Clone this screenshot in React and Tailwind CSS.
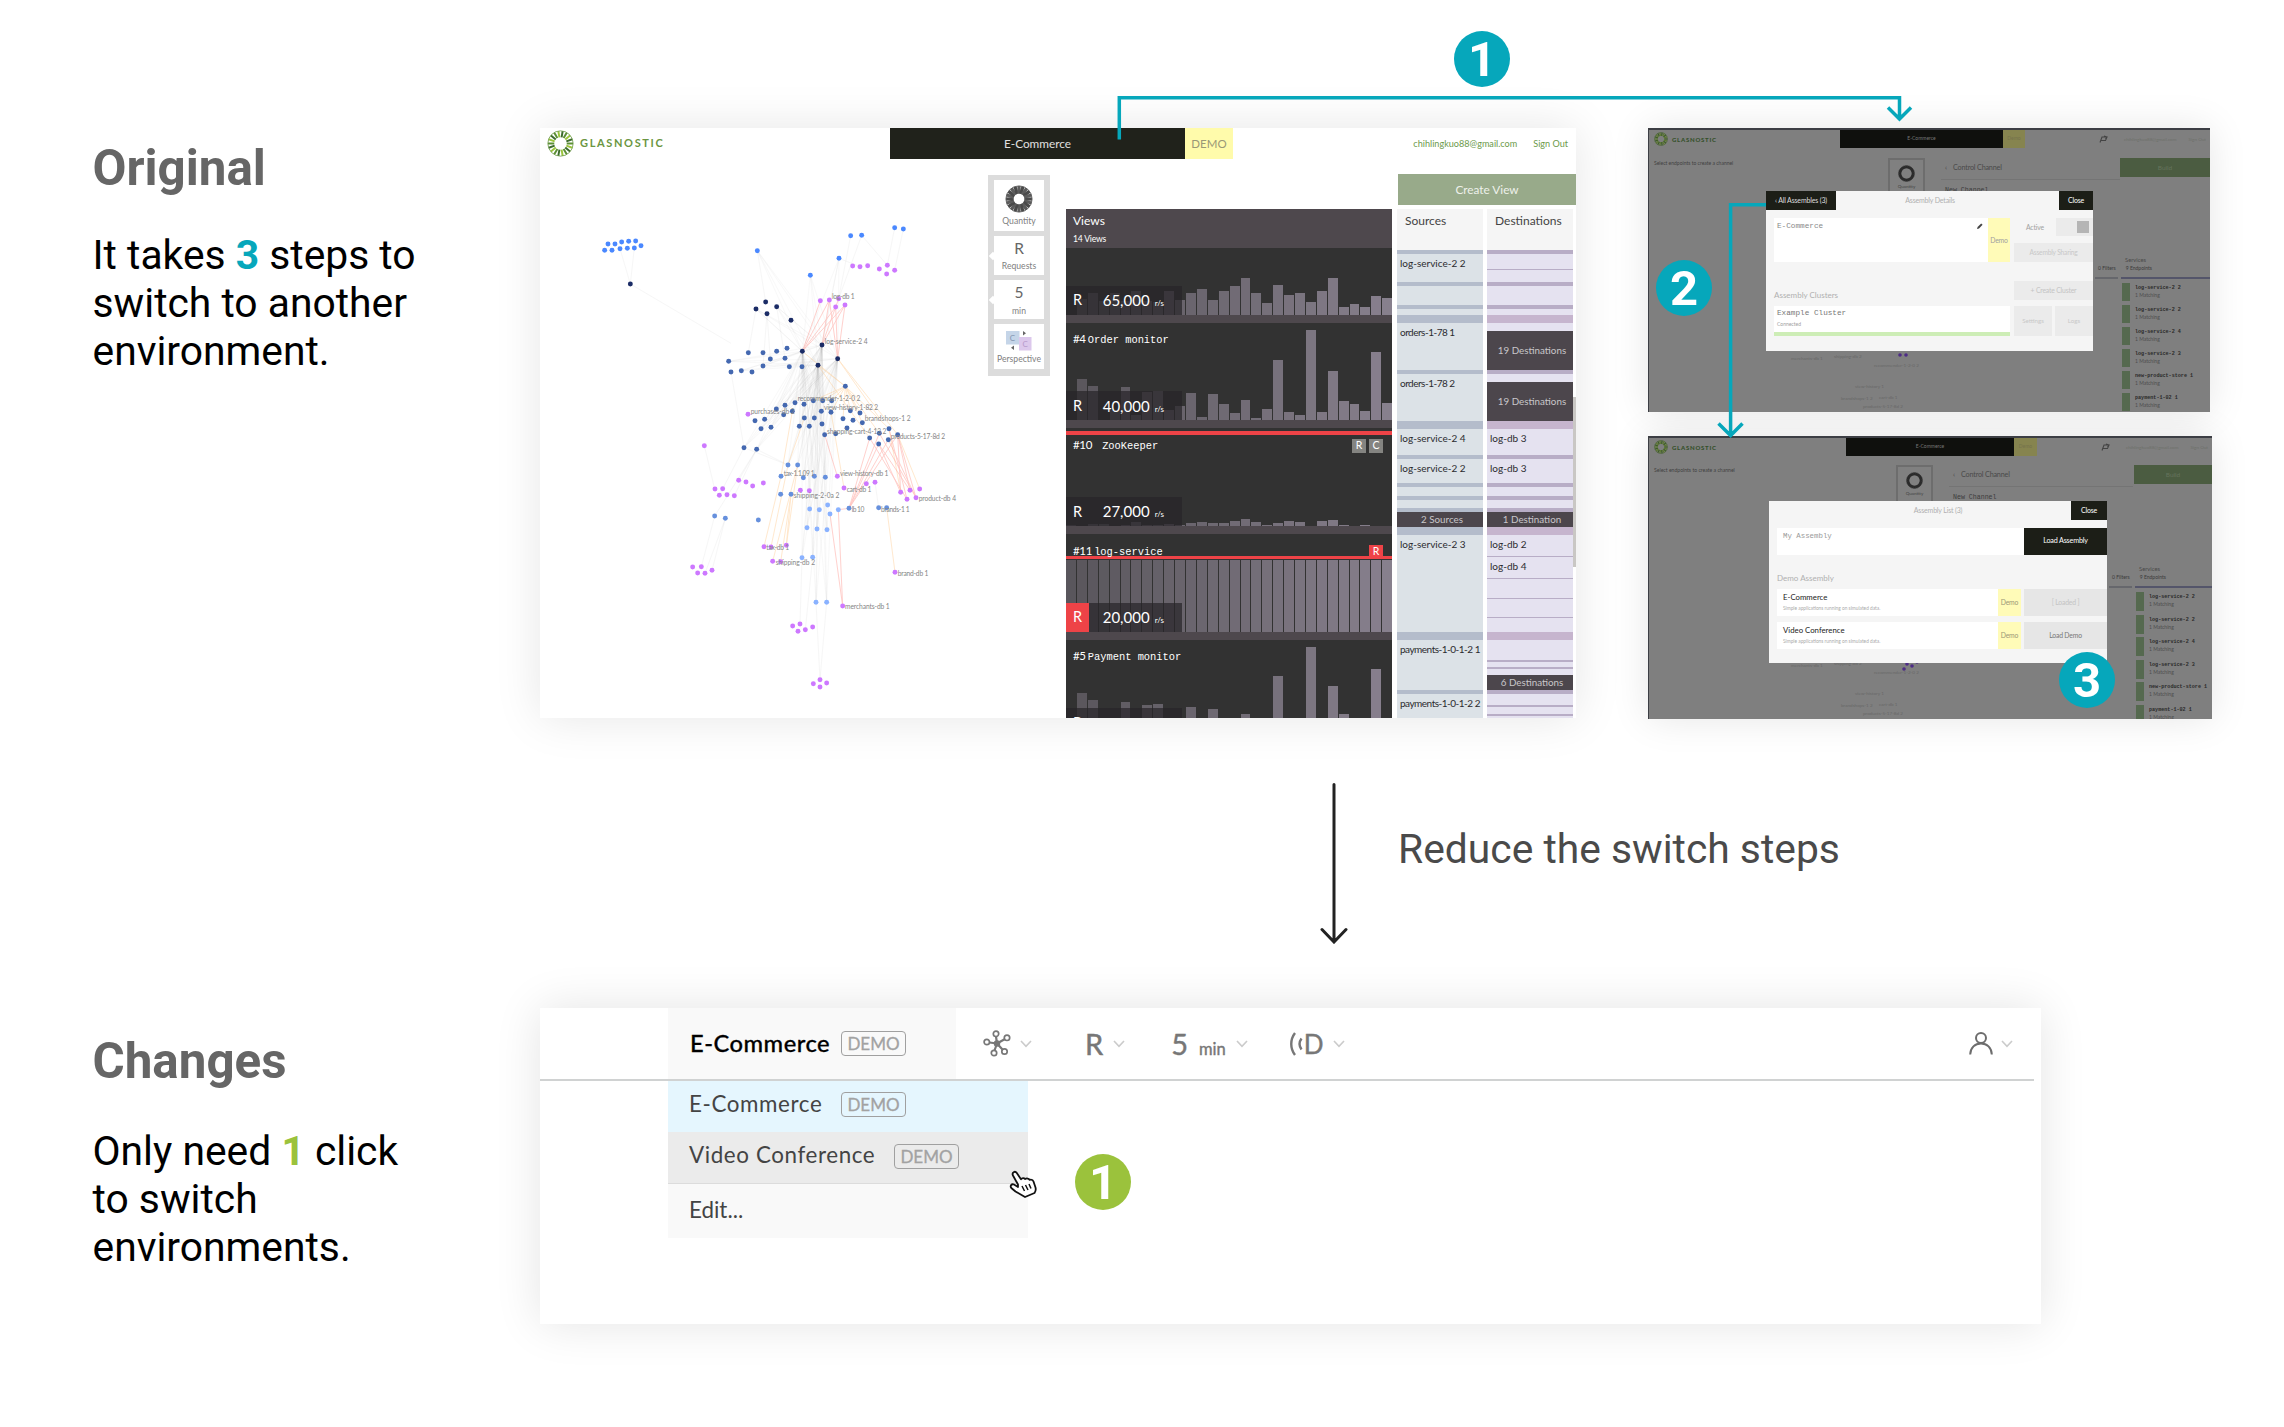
import React from "react";

const NODE_FILL = {
  b: "#4a88ff",
  n: "#1b2c66",
  m: "#4468b0",
  s: "#6690dd",
  l: "#8ab2ff",
  p: "#cd78ff",
};

const NODES = [
  ["b", [[234, 402], [255, 402], [275, 396], [296, 394], [317, 393], [333, 407], [224, 421], [246, 421], [270, 416], [292, 415], [313, 414], [682, 422], [841, 496], [927, 445], [962, 377], [995, 376], [1094, 353], [1120, 357]]],
  ["n", [[301, 522], [707, 576], [678, 597], [740, 590], [711, 611], [783, 631], [876, 705], [817, 724], [923, 746], [864, 766]]],
  ["p", [[968, 468], [990, 470], [1013, 467], [1048, 477], [1072, 466], [1094, 481], [1070, 492], [871, 572], [898, 570], [926, 566], [917, 591], [945, 585], [654, 913]]],
  ["m", [[655, 728], [699, 728], [740, 724], [771, 715], [721, 747], [765, 745], [699, 768], [778, 770], [816, 770], [596, 754], [603, 786], [634, 782], [666, 786], [946, 829], [795, 878], [822, 883], [850, 872], [878, 872], [905, 872], [765, 886], [739, 897], [787, 904], [761, 914], [874, 904], [903, 907], [961, 902], [990, 909], [675, 932], [704, 928], [693, 956], [723, 952], [823, 924], [853, 924], [939, 926], [969, 931], [997, 938], [808, 949], [838, 949], [876, 942], [951, 954], [884, 974], [917, 971], [1019, 984], [1048, 970], [1077, 956], [1103, 974], [1075, 989], [1046, 1002], [642, 1013], [680, 1018]]],
  ["s", [[774, 1065], [803, 1065], [753, 1099], [820, 1103], [853, 1099], [886, 1102], [752, 1153], [783, 1153], [554, 1218], [586, 1225], [685, 1230], [957, 1195], [1046, 1193], [1070, 1193]]],
  ["l", [[839, 1197], [868, 1199], [893, 1185], [925, 1199], [900, 1212], [831, 1253], [861, 1257], [891, 1259], [816, 1343], [848, 1342], [858, 1477], [890, 1477]]],
  ["p", [[523, 1007], [626, 1111], [648, 1116], [668, 1128], [700, 1119], [555, 1137], [578, 1136], [568, 1156], [591, 1154], [613, 1157], [922, 1099], [942, 1134], [811, 1141], [838, 1142], [1009, 1121], [1035, 1117], [1112, 1147], [1140, 1141], [1169, 1137], [1131, 1168], [1158, 1163], [702, 1310], [723, 1311], [769, 1306], [728, 1354], [752, 1355], [488, 1371], [514, 1370], [503, 1389], [525, 1390], [546, 1381], [1095, 1387], [938, 1488], [788, 1548], [810, 1542], [804, 1564], [826, 1559], [848, 1551], [850, 1721], [870, 1709], [890, 1719], [870, 1731]]],
];

const LABELS = [
  [906, 568, 68, "log-db 1"],
  [884, 701, 129, "log-service-2 4"],
  [803, 874, 188, "recommender-1-2-0 2"],
  [662, 911, 132, "purchases-db 2"],
  [882, 901, 162, "view-history-1-82 2"],
  [1004, 934, 138, "brandshops-1 2"],
  [891, 972, 178, "shopping-cart-4-13 2"],
  [1082, 986, 163, "products-5-17-8d 2"],
  [761, 1097, 93, "tax-1.1.09 1"],
  [930, 1097, 145, "view-history-db 1"],
  [950, 1145, 74, "cart-db 1"],
  [791, 1165, 137, "shipping-2-0a 2"],
  [1166, 1174, 112, "product-db 4"],
  [965, 1207, 38, "lb 10"],
  [1053, 1206, 86, "brands-1 1"],
  [709, 1321, 68, "tax-db 1"],
  [737, 1365, 118, "shipping-db 2"],
  [1103, 1398, 92, "brand-db 1"],
  [945, 1498, 134, "merchants-db 1"],
];

const RED_EDGES = [
  [871, 572, 817, 724], [898, 570, 817, 724], [917, 591, 817, 724], [945, 585, 817, 724],
  [898, 570, 876, 705], [926, 566, 876, 705], [945, 585, 876, 705],
  [898, 570, 923, 746], [917, 591, 923, 746], [945, 585, 923, 746],
  [957, 1195, 1019, 984], [957, 1195, 1048, 970], [957, 1195, 1046, 1002], [957, 1195, 1075, 989], [957, 1195, 1103, 974],
  [1019, 984, 1131, 1168], [1046, 1002, 1140, 1141], [1075, 989, 1158, 1163], [1103, 974, 1158, 1163],
  [1077, 956, 1131, 1168], [1103, 974, 1112, 1147], [1048, 970, 1158, 1163], [1046, 1002, 1112, 1147], [1103, 974, 1140, 1141],
  [884, 974, 922, 1099], [925, 1199, 938, 1488], [900, 1212, 938, 1488], [925, 1199, 957, 1195],
];

const ORANGE_EDGES = [
  [817, 724, 946, 829], [864, 766, 946, 829], [923, 746, 1048, 924], [946, 829, 905, 872], [946, 829, 878, 872],
  [946, 829, 961, 902], [946, 829, 990, 909], [946, 829, 997, 938], [946, 829, 903, 907], [946, 829, 939, 926],
  [946, 829, 1048, 970], [946, 829, 1077, 956], [946, 829, 850, 872], [1103, 974, 1169, 1137], [1077, 956, 1112, 1147],
  [753, 1099, 702, 1310], [774, 1065, 723, 1311], [803, 1065, 728, 1354], [783, 1153, 752, 1355], [783, 1153, 769, 1306],
  [803, 1065, 769, 1306], [1070, 1193, 1095, 1387], [903, 907, 942, 1134], [923, 746, 1103, 974], [864, 766, 1019, 984],
  [787, 904, 753, 1099], [823, 924, 774, 1065],
];

const HUBS = [[817, 724], [876, 705], [923, 746], [864, 766]];
const GREY_TARGETS = [
  [682, 422], [841, 496], [927, 445], [678, 597], [740, 590], [596, 754], [634, 782], [699, 768], [739, 897], [761, 914],
  [795, 878], [822, 883], [850, 872], [878, 872], [693, 956], [723, 952], [808, 949], [838, 949], [853, 924], [876, 942],
  [642, 1013], [680, 1018], [774, 1065], [803, 1065], [820, 1103], [853, 1099], [886, 1102], [831, 1253], [861, 1257],
  [891, 1259], [816, 1343], [848, 1342], [858, 1477], [890, 1477],
];
const GREY_EDGES = [
  [270, 416, 301, 522], [313, 414, 301, 522], [301, 522, 603, 700], [682, 422, 707, 576], [962, 377, 926, 566],
  [995, 376, 926, 566], [1094, 353, 1072, 466], [1120, 357, 1094, 481], [995, 376, 1072, 466], [927, 445, 990, 470],
  [603, 786, 642, 1013], [642, 1013, 774, 1065], [680, 1018, 774, 1065], [642, 1013, 568, 1156], [680, 1018, 613, 1157],
  [680, 1018, 626, 1111], [554, 1218, 514, 1370], [586, 1225, 546, 1381], [586, 1225, 525, 1390], [680, 1018, 554, 1218],
  [816, 1343, 810, 1542], [848, 1342, 826, 1559], [858, 1477, 870, 1709], [890, 1477, 870, 1709], [523, 1007, 554, 1137],
  [678, 597, 655, 728], [711, 611, 699, 768], [711, 611, 721, 747], [740, 590, 765, 745], [1035, 1117, 1046, 1193],
];

function ServiceGraph() {
  return (
    <svg className="h-[554px] w-[448px]" viewBox="30 162 1344 1662">
      <g stroke="#9a9a9a" strokeWidth="2">
        {GREY_TARGETS.map(([x, y], i) =>
          HUBS.map(([hx, hy], j) => <line key={i + "-" + j} x1={hx} y1={hy} x2={x} y2={y} opacity="0.09" />)
        )}
        {GREY_EDGES.map(([a, b, c, d], i) => (
          <line key={i} x1={a} y1={b} x2={c} y2={d} opacity="0.12" />
        ))}
      </g>
      <g stroke="#ffc27a" strokeWidth="2.4" opacity="0.45">
        {ORANGE_EDGES.map(([a, b, c, d], i) => <line key={i} x1={a} y1={b} x2={c} y2={d} />)}
      </g>
      <g stroke="#ff8d84" strokeWidth="2.4" opacity="0.5">
        {RED_EDGES.map(([a, b, c, d], i) => <line key={i} x1={a} y1={b} x2={c} y2={d} />)}
      </g>
      {NODES.map(([kind, points], i) => (
        <g key={i} fill={NODE_FILL[kind]}>
          {points.map(([x, y], j) => <circle key={j} cx={x} cy={y} r="7.4" />)}
        </g>
      ))}
      <g fill="#858585" fontFamily="Lato, sans-serif" fontSize="20">
        {LABELS.map(([x, y, w, t]) => <text key={t} x={x} y={y} textLength={w}>{t}</text>)}
      </g>
    </svg>
  );
}

function Ring({ className, colors, inner = 6, outer = 12, width = 1.9, count = 18 }) {
  return (
    <svg className={className} viewBox="-13 -13 26 26">
      {Array.from({ length: count }, (_, i) => {
        const a = (i / count) * Math.PI * 2;
        return (
          <line
            key={i}
            x1={Math.cos(a) * inner}
            y1={Math.sin(a) * inner}
            x2={Math.cos(a) * outer}
            y2={Math.sin(a) * outer}
            stroke={colors[i % colors.length]}
            strokeWidth={width}
          />
        );
      })}
      <circle r="12.2" fill="none" stroke={colors[0]} strokeWidth="0.7" />
    </svg>
  );
}

function Bars({ values }) {
  return (
    <div className="flex h-full w-full items-end gap-px">
      {values.map((v, i) => (
        <div key={i} className="flex-1 bg-[#9990a0]" style={{ height: v, opacity: 0.38 + (i / 29) * 0.45 }} />
      ))}
    </div>
  );
}

const VIEWS = [
  { value: "65,000", bars: [0, 16, 22, 14, 22, 14, 24, 14, 13, 24, 15, 22, 26, 15, 24, 29, 37, 22, 12, 30, 20, 22, 13, 24, 37, 8, 11, 8, 19, 17] },
  { no: "#4", name: "Order monitor", value: "40,000", bars: [0, 41, 34, 0, 10, 33, 5, 28, 29, 10, 14, 27, 3, 26, 16, 7, 20, 2, 11, 60, 8, 5, 90, 8, 49, 19, 16, 9, 68, 17] },
  { no: "#10", name: "ZooKeeper", value: "27,000", badges: ["R", "C"], topLine: true, bars: [1, 0, 2, 2, 0, 1, 4, 1, 1, 2, 1, 3, 4, 3, 3, 5, 7, 4, 1, 3, 5, 4, 0, 5, 6, 1, 0, 1, 0, 0] },
  { no: "#11", name: "log-service", value: "20,000", badges: ["R"], alert: true, bars: Array(30).fill(72) },
  { no: "#5", name: "Payment monitor", value: "7,500", bars: [0, 44, 37, 0, 12, 35, 8, 32, 33, 10, 14, 30, 3, 28, 18, 9, 23, 4, 12, 61, 10, 6, 90, 10, 51, 23, 17, 10, 68, 18] },
];

function ViewCard({ view }) {
  return (
    <div className="relative h-[105.7px] shrink-0 border-b-8 border-[#4e484d] bg-[#323232]">
      <Bars values={view.bars} />
      {view.topLine && <div className="absolute inset-x-0 top-[3px] h-1 bg-[#ee4347]" />}
      {view.alert && <div className="absolute inset-x-0 top-[22px] h-[3px] bg-[#ee4347]" />}
      {view.name && (
        <div className="absolute left-[7px] top-[9.5px] flex items-baseline gap-[2px] text-[11.5px] leading-[14px] tracking-[-0.3px] text-white">
          <span>{view.no}</span>
          <span className={view.no === "#10" ? "ml-2 font-['Liberation_Mono',monospace] text-[10.4px] tracking-normal" : "font-['Liberation_Mono',monospace] text-[10.4px] tracking-normal"}>{view.name}</span>
        </div>
      )}
      {view.badges && (
        <div className="absolute right-[9px] top-[10.5px] flex gap-[3px]">
          {view.badges.map((b) => (
            <span key={b} className={view.alert ? "flex size-[14px] items-center justify-center bg-[#ee4347] text-[10.5px] text-white" : "flex size-[14px] items-center justify-center bg-[#848481] text-[10.5px] text-white"}>{b}</span>
          ))}
        </div>
      )}
      <div className="absolute bottom-0 left-0 flex h-[29px] w-[116px] items-center bg-[#262428]/70 text-white">
        <span className={view.alert ? "flex h-full w-[23px] items-center pl-[7px] text-[14.5px] bg-[#ee4347]" : "flex h-full w-[23px] items-center pl-[7px] text-[14.5px]"}>R</span>
        <span className="flex flex-1 items-baseline justify-end gap-[5px] pr-[18px] text-[15px]">
          {view.value}
          <span className="text-[8px]">r/s</span>
        </span>
      </div>
    </div>
  );
}

const SOURCES = [
  [4, "band"], [28, "cell", "log-service-2 2"], [4, "band"], [19, "cell"], [4, "band"], [6, "cell"], [8, "band"],
  [47, "cell", "orders-1-78 1"], [4, "band"], [47, "cell", "orders-1-78 2"], [8, "band"], [26, "cell", "log-service-2 4"],
  [4, "band"], [24, "cell", "log-service-2 2"], [4, "band"], [9, "cell"], [4, "band"], [8, "cell"], [4, "band"],
  [15, "dark", "2 Sources"], [8, "band"], [97, "cell", "log-service-2 3"], [8, "band"], [50, "cell", "payments-1-0-1-2 1"],
  [4, "band"], [24, "cell", "payments-1-0-1-2 2"],
];

const DESTINATIONS = [
  [4, "band"], [15, "cell"], [1, "band"], [12, "cell"], [4, "band"], [19, "cell"], [4, "band"], [6, "cell"], [8, "wide"],
  [8, "cell"], [39, "dark", "19 Destinations"], [4, "band"], [8, "cell"], [39, "dark", "19 Destinations"], [8, "wide"],
  [26, "cell", "log-db 3"], [4, "band"], [24, "cell", "log-db 3"], [4, "band"], [9, "cell"], [4, "band"], [8, "cell"], [4, "band"],
  [15, "dark", "1 Destination"], [8, "wide"], [21, "cell", "log-db 2"], [1, "band"], [21, "cell", "log-db 4"], [1, "band"],
  [19, "cell"], [1, "band"], [18, "cell"], [1, "band"], [14, "cell"], [8, "wide"], [20, "cell"], [2, "band"], [5, "cell"], [2, "band"],
  [6, "cell"], [15, "dark", "6 Destinations"], [4, "band"], [11, "cell"], [2, "band"], [7, "cell"], [2, "band"], [2, "cell"],
];

const SEGMENT_CLASS = {
  source: { band: "bg-[#b4bccb]", cell: "bg-[#dce2e7]", wide: "bg-[#b4bccb]" },
  dest: { band: "bg-[#b8adc6]", cell: "bg-[#e5e2f0]", wide: "bg-[#c6b5ce]" },
};

function SegmentColumn({ title, tone, segments }) {
  return (
    <div className="flex w-[86px] flex-col overflow-hidden">
      <div className="h-[41px] shrink-0 bg-[#f5f5f5] pl-2 pt-[4px] text-[12px] leading-[15px] text-[#444]">{title}</div>
      {segments.map(([h, kind, label], i) =>
        kind === "dark" ? (
          <div key={i} className="flex shrink-0 items-center justify-center pl-1 text-[9.8px] leading-none bg-[#4c464c] text-[#c9c7ca]" style={{ height: h }}>{label}</div>
        ) : (
          <div key={i} className={"shrink-0 whitespace-nowrap pl-[3px] text-[10px] leading-[18px] text-[#2b2b2f] " + SEGMENT_CLASS[tone][kind]} style={{ height: h }}>
            <span className={label && (label.length > 15 || label.startsWith("orders")) ? "tracking-[-0.5px]" : ""}>{label}</span>
          </div>
        )
      )}
    </div>
  );
}

function ToolCard({ className, children, label, notch }) {
  return (
    <div className={"relative flex w-[50px] flex-col items-center bg-white " + className}>
      {notch && <div className="absolute -left-1 top-1/2 size-[6px] -translate-y-1/2 rotate-45 bg-white" />}
      {children}
      <span className="text-[8.6px] leading-[11px] text-[#808080]">{label}</span>
    </div>
  );
}

function OriginalScreen() {
  return (
    <div className="flex h-[590px] w-[1036px] shrink-0 flex-col overflow-hidden bg-white">
      <div className="flex h-[36px] shrink-0 items-start">
        <div className="flex w-[350px] items-center pl-[7px] pt-[2px]">
          <Ring className="size-[27px]" colors={["#5c8f35", "#9bc53d", "#3c6b2c"]} />
          <span className="ml-[6px] text-[11px] font-bold tracking-[1.65px] text-[#6b9642]">GLASNOSTIC</span>
        </div>
        <div className="flex h-[31px] w-[295px] items-center justify-center bg-[#20221b] text-[11.8px] text-[#e0e0e0]">E-Commerce</div>
        <div className="flex h-[31px] w-[48px] items-center justify-center bg-[#fffbab] text-[11.5px] text-[#9a9876]">DEMO</div>
        <div className="flex h-[31px] flex-1 items-center justify-end gap-4 pr-2 text-[9.1px] text-[#6c9a4a]">
          <span>chihlingkuo88@gmail.com</span>
          <span>Sign Out</span>
        </div>
      </div>
      <div className="flex flex-1">
        <ServiceGraph />
        <div className="mt-[11px] flex h-[201px] w-[62px] flex-col items-center gap-[5px] bg-[#dcdcdc] pt-[5px]">
          <ToolCard className="h-[51px] pt-[5px]" label="Quantity">
            <Ring className="mb-[3px] size-[28px]" colors={["#4a4a4a", "#5c5c5c"]} inner={5} width={3} count={20} />
          </ToolCard>
          <ToolCard className="h-[39px] pt-[3px]" label="Requests" notch>
            <span className="mb-[4px] text-[15.5px] leading-[18px] text-[#666]">R</span>
          </ToolCard>
          <ToolCard className="h-[39px] pt-[3px]" label="min" notch>
            <span className="mb-[5px] text-[15.5px] leading-[18px] text-[#666]">5</span>
          </ToolCard>
          <ToolCard className="h-[45px] pt-[6px]" label="Perspective">
            <svg className="mb-[3px] h-[21px] w-[28px]" viewBox="0 0 28 21">
              <rect x="1" y="1" width="13.5" height="13.5" fill="#c5d5e8" />
              <rect x="14" y="7" width="12.5" height="13.5" fill="#dcc8ec" />
              <path d="M18 1l3 2.2-3 2.2zM9 15.5v4.5l-3-2.2z" fill="#666" />
              <text x="4.8" y="11" fontSize="8" fontFamily="Lato" fill="#8296b0">C</text>
              <text x="17.5" y="17" fontSize="8" fontFamily="Lato" fill="#b79acb">C</text>
            </svg>
          </ToolCard>
        </div>
        <div className="ml-4 mt-[45px] flex h-[509px] w-[326px] flex-col overflow-hidden bg-[#4e484d]">
          <div className="flex h-[39px] shrink-0 flex-col gap-[6px] pl-[7px] pt-[4px] text-white">
            <span className="text-[12px] leading-[15px]">Views</span>
            <span className="text-[8.6px] leading-[10px] tracking-tight">14 Views</span>
          </div>
          <div className="flex h-[470px] flex-col overflow-hidden">
            <div className="-mt-[31px] flex flex-col">
              {VIEWS.map((v) => <ViewCard key={v.value} view={v} />)}
            </div>
          </div>
        </div>
        <div className="ml-[5px] mt-[10px] w-[179px]">
          <div className="ml-px flex h-[31px] items-center justify-center bg-[#98aa8a] text-[11.8px] text-[#eef1eb]">Create View</div>
          <div className="mt-1 flex h-[509px] gap-1">
            <SegmentColumn title="Sources" tone="source" segments={SOURCES} />
            <SegmentColumn title="Destinations" tone="dest" segments={DESTINATIONS} />
            <div className="-ml-1 mt-[188px] h-[170px] w-[3px] bg-[#c9c7c4]" />
          </div>
        </div>
      </div>
    </div>
  );
}

const SERVICES = ["log-service-2 2", "log-service-2 2", "log-service-2 4", "log-service-2 3", "new-product-store 1", "payment-1-02 1"];

const MINI_A = {
  frame: "h-[284px] w-[562px]",
  left: "w-[191px]", bar: "w-[163px]", demo: "w-[22px]",
  body: "pt-[10px]",
  hint: "w-[239px] text-[5px]",
  build: "w-[90px]",
  control: "ml-4 w-[179px]",
  list: "w-[115px] pt-[66px]",
  row: "h-[18px] mb-[4px]",
};
const MINI_B = {
  frame: "h-[283px] w-[564px]",
  left: "w-[197px]", bar: "w-[168px]", demo: "w-[23px]",
  body: "pt-[9px]",
  hint: "w-[247px] text-[5.1px]",
  build: "w-[78px]",
  control: "ml-4 w-[184px]",
  list: "w-[103px] pt-[68px]",
  row: "h-[19px] mb-[3.6px]",
};

function DimmedScreen({ size, dots, children }) {
  return (
    <div className={"relative flex flex-col overflow-hidden border-l border-t-2 border-[#3c3e44] bg-[#7f7f7f] " + size.frame}>
      <div className="flex h-[18px] shrink-0">
        <div className={"flex items-center gap-1 pl-[5px] " + size.left}>
          <Ring className="size-[14px]" colors={["#3f5f26", "#5d7a30"]} width={2.4} />
          <span className="text-[6px] font-black tracking-[0.75px] text-[#34502a]">GLASNOSTIC</span>
        </div>
        <div className={"flex items-center justify-center bg-[#0f100d] text-[5px] text-[#777] " + size.bar}>E-Commerce</div>
        <div className={"flex items-center justify-center bg-[#86844f] text-[5px] text-[#74724c] " + size.demo}>Demo</div>
        <div className="flex min-w-0 flex-1 items-center justify-end gap-3 pr-1 text-[4.6px] text-[#6d706a]">
          <svg className="mr-1 size-[9px]" viewBox="0 0 9 9" fill="none" stroke="#444" strokeWidth="1.1">
            <path d="M1 7.500L3 2H8L6.500 5.500H2M5 1L8 2L6.500 4" />
          </svg>
          <span>chihlingkuo88@gmail.com</span>
          <span>Sign Out</span>
        </div>
      </div>
      <div className={"flex flex-1 " + size.body}>
        <div className={"shrink-0 pt-[1px] leading-[8px] text-[#3f3f3f] " + size.hint}>
          <span className="pl-[5px]">Select endpoints to create a channel</span>
        </div>
        <div className="flex h-[40px] w-[37px] shrink-0 flex-col items-center border-2 border-[#6d6d6d] bg-[#808080] pt-[5px]">
          <Ring className="size-[17px]" colors={["#2b2b2b"]} inner={8} width={3.5} count={24} />
          <span className="mt-[2px] text-[4.5px] leading-[5px] text-[#444]">Quantity</span>
        </div>
        <div className={"shrink-0 " + size.control}>
          <div className="flex h-[22px] items-center gap-[6px] border-b border-[#747474] pl-1 text-[7.2px] text-[#4a4a4a]">
            <span>‹</span>
            <span className="tracking-tight">Control Channel</span>
          </div>
          <div className="pl-1 pt-[6px] font-['Liberation_Mono',monospace] text-[6.6px] text-[#3c3c3c]">New Channel</div>
        </div>
        <div className="flex min-w-0 flex-1 flex-col items-end">
          <div className={"flex h-[19px] shrink-0 items-center justify-center bg-[#4b5c41] text-[6.5px] text-[#65735c] " + size.build}>Build</div>
          <div className={"mt-[12px] flex flex-col whitespace-nowrap text-[5px] leading-[9px] text-[#3b3b3b] " + size.list}>
            <div className="pl-[30px] text-[5.8px] text-[#4a4a4a]">Services</div>
            <div className="flex gap-[10px] pl-[3px]">
              <span>0 Filters</span>
              <span>9 Endpoints</span>
            </div>
            <div className="mb-1 mt-[4px] flex gap-[3px]">
              <div className="h-[2px] w-[23px] bg-[#66676c]" />
              <div className="h-[2px] flex-1 bg-[#54556a]" />
            </div>
            {SERVICES.map((s, i) => (
              <div key={i} className={"flex shrink-0 pl-[27px] " + size.row}>
                <div className="w-2 shrink-0 bg-[#55694f]" />
                <div className="flex flex-1 flex-col pl-[5px] pt-[1px]">
                  <span className="font-['Liberation_Mono',monospace] text-[5.1px] font-bold leading-[8px] text-[#2a2a2a]">{s}</span>
                  <span className="text-[5px] leading-[7px] text-[#4e4e4e]">1 Matching</span>
                </div>
              </div>
            ))}
          </div>
        </div>
      </div>
      <svg className="absolute bottom-0 left-[130px] h-[66px] w-[170px]" viewBox="0 0 170 66">
        <g fill="#686868" fontFamily="Lato, sans-serif" fontSize="4.6">
          <text x="12" y="14">merchants-db 1</text>
          <text x="55" y="12">shipping-db 2</text>
          <text x="95" y="21">recommender-1-2-0 2</text>
          <text x="76" y="42">view-history 1</text>
          <text x="62" y="54">brandshops-1 2</text>
          <text x="100" y="53">cart-db 1</text>
          <text x="84" y="62">products-5-17-8d 2</text>
        </g>
        <g fill="#4d2c86">{dots.map(([x, y]) => <circle key={x} cx={x} cy={y} r="1.8" />)}</g>
      </svg>
      {children}
    </div>
  );
}

function AssemblyDetails() {
  return (
    <div className="absolute left-[117px] top-[61px] flex h-[160px] w-[327px] flex-col bg-[#f5f5f5] text-[#a0a0a0]">
      <div className="flex h-[19px] items-stretch justify-between text-[7px]">
        <div className="flex w-[70px] items-center justify-center bg-[#1c1e17] text-[7px] tracking-tight text-[#ddd]">‹ All Assembles (3)</div>
        <div className="flex items-center pr-[35px] tracking-tight text-[#b0b0b0]">Assembly Details</div>
        <div className="flex w-[34px] items-center justify-center bg-[#1c1e17] tracking-tight text-white">Close</div>
      </div>
      <div className="mt-2 flex h-[44px] pl-2">
        <div className="flex w-[214px] justify-between bg-white px-[3px] pt-[3px]">
          <span className="font-['Liberation_Mono',monospace] text-[7.7px] leading-[11px] text-[#888]">E-Commerce</span>
          <svg className="mr-[2px] mt-[2px] size-[6px]" viewBox="0 0 6 6"><path d="M0 6l.6-2L4.2.4l1.4 1.4L2 5.4z" fill="#444" /></svg>
        </div>
        <div className="flex w-[22px] items-center justify-center bg-[#fffbb8] text-[6.8px] tracking-tight">Demo</div>
        <div className="ml-[4px] flex flex-1 flex-col justify-between">
          <div className="flex h-[18px] items-center justify-between pl-3 text-[6.8px] tracking-tight">
            <span>Active</span>
            <div className="flex h-[18px] w-[37px] items-center justify-end bg-[#ebebeb] pr-1">
              <div className="size-[12px] bg-[#b5b5b5]" />
            </div>
          </div>
          <div className="flex h-[19px] items-center justify-center bg-[#ebebeb] text-[6.6px] tracking-tight text-[#c8c8c8]">Assembly Sharing</div>
        </div>
      </div>
      <div className="mt-[19px] flex h-[19px] pl-2">
        <div className="flex-1 pt-[9px] text-[8px] leading-[11px] text-[#b0b0b0]">Assembly Clusters</div>
        <div className="flex w-[79px] items-center justify-center bg-[#ebebeb] text-[6.8px] tracking-tight text-[#c4c4c4]">+ Create Cluster</div>
      </div>
      <div className="mt-[6px] flex h-[30px] pl-2">
        <div className="flex w-[236px] flex-col border-b-4 border-[#cdedb6] bg-white pl-[3px] pt-[2px]">
          <span className="font-['Liberation_Mono',monospace] text-[7.7px] leading-[11px] text-[#777]">Example Cluster</span>
          <span className="mt-[2px] text-[5px] leading-[7px]">Connected</span>
        </div>
        <div className="ml-[4px] flex w-[38px] items-center justify-center bg-[#ebebeb] text-[6.2px] text-[#c8c8c8]">Settings</div>
        <div className="ml-[3px] flex flex-1 items-center justify-center bg-[#ebebeb] text-[6.2px] text-[#c8c8c8]">Logs</div>
      </div>
    </div>
  );
}

function DemoRow({ name, action, muted }) {
  return (
    <div className="flex h-[27px] pl-2">
      <div className="flex w-[221px] flex-col bg-white pl-[6px] pt-[3px]">
        <span className="text-[7.8px] leading-[11px] text-[#222]">{name}</span>
        <span className="mt-[1px] text-[4.8px] leading-[8px] text-[#aaa]">Simple applications running on simulated data.</span>
      </div>
      <div className="flex w-[23px] items-center justify-center bg-[#fffbb8] text-[6.8px] tracking-tight text-[#9b9877]">Demo</div>
      <div className={muted ? "ml-[3px] flex flex-1 items-center justify-center bg-[#e6e6e6] text-[6.8px] tracking-tight text-[#c4c4c4]" : "ml-[3px] flex flex-1 items-center justify-center bg-[#e6e6e6] text-[6.8px] tracking-tight text-[#777]"}>{action}</div>
    </div>
  );
}

function AssemblyList() {
  return (
    <div className="absolute left-[120px] top-[63px] flex h-[162px] w-[338px] flex-col bg-[#f5f5f5]">
      <div className="flex h-[19px] text-[7px] tracking-tight">
        <div className="flex flex-1 items-center justify-center pl-[36px] text-[#b0b0b0]">Assembly List (3)</div>
        <div className="flex w-[36px] items-center justify-center bg-[#1c1e17] text-white">Close</div>
      </div>
      <div className="mt-2 flex h-[27px] pl-2">
        <div className="flex-1 bg-white pl-[6px] pt-[3px] font-['Liberation_Mono',monospace] text-[7.4px] leading-[11px] text-[#999]">My Assembly</div>
        <div className="flex w-[83px] items-center justify-center bg-[#1c1e17] text-[7.2px] tracking-tight text-white">Load Assembly</div>
      </div>
      <div className="mb-[5px] mt-[18px] pl-2 text-[8px] leading-[11px] text-[#b0b0b0]">Demo Assembly</div>
      <DemoRow name="E-Commerce" action="[ Loaded ]" muted />
      <div className="h-[6px]" />
      <DemoRow name="Video Conference" action="Load Demo" />
    </div>
  );
}

function Chevron({ className }) {
  return (
    <svg className={"h-[8px] w-[12px] " + className} viewBox="0 0 12 8" fill="none" stroke="#cbcbcb" strokeWidth="1.6">
      <path d="M1 1l5 5.4L11 1" />
    </svg>
  );
}

function DemoTag({ className }) {
  return (
    <span className={"flex h-[25px] w-[65px] items-center justify-center rounded-[4px] border-[1.5px] border-[#a0a0a0] text-[17px] leading-none text-[#a2a2a2] [-webkit-text-stroke:0.3px_#a2a2a2] " + className}>DEMO</span>
  );
}

function ChangesScreen() {
  return (
    <div className="relative h-[316px] w-[1501px] shrink-0 bg-white shadow-[0_0_44px_rgba(0,0,0,0.11)]">
      <div className="flex h-[73px] w-[1494px] items-stretch border-b-2 border-[#d0d2d2] pl-[128px] text-[#777]">
        <div className="flex w-[288px] items-center bg-[#f9f9f9] pl-[22px]">
          <span className="w-[151px] text-[23.7px] font-medium tracking-[0.5px] text-black [-webkit-text-stroke:0.3px_black]">E-Commerce</span>
          <DemoTag className="" />
        </div>
        <div className="flex items-center pl-[27px]">
          <svg className="h-[27px] w-[28px]" viewBox="0 0 28 27" fill="none" stroke="#777" strokeWidth="1.7">
            <path d="M14 13.5L13 6.500M14 13.500L22 9M14 13.500L6.500 12.500M14 13.500L11.500 20.500M14 13.500L19.500 19.500" strokeWidth="2.200" />
            <circle cx="13" cy="3.800" r="2.700" />
            <circle cx="24" cy="7.800" r="2.700" />
            <circle cx="3.800" cy="12" r="2.700" />
            <circle cx="11" cy="23" r="2.700" />
            <circle cx="21.500" cy="21.500" r="2.700" />
            <circle cx="14" cy="13.500" r="2.400" fill="#777" />
          </svg>
          <Chevron className="ml-[9px]" />
          <span className="ml-[53px] text-[29px] leading-none [-webkit-text-stroke:0.5px_#777]">R</span>
          <Chevron className="ml-[10px]" />
          <span className="ml-[46px] flex items-baseline text-[29px] leading-none [-webkit-text-stroke:0.4px_#777]">
            5<span className="ml-[11px] text-[16.5px]">min</span>
          </span>
          <Chevron className="ml-[10px]" />
          <svg className="ml-[41px] h-[24px] w-[14px]" viewBox="0 0 14 24" fill="none" stroke="#777" strokeWidth="2.400">
            <path d="M6 1C1 7.500 1 16.500 6 23M12.500 6.500C10 10 10 14 12.500 17.500" />
          </svg>
          <span className="ml-px text-[26px] leading-none [-webkit-text-stroke:0.4px_#777]">D</span>
          <Chevron className="ml-[9px]" />
        </div>
        <div className="ml-auto flex items-center pr-[21px]">
          <svg className="h-[23px] w-[24px]" viewBox="0 0 24 23" fill="none" stroke="#6d6d6d" strokeWidth="2">
            <circle cx="12" cy="6" r="5" />
            <path d="M1.200 22.500C1.500 15.500 6 11.500 12 11.500S22.500 15.500 22.800 22.500" />
          </svg>
          <Chevron className="ml-[8px]" />
        </div>
      </div>
      <div className="absolute left-[128px] top-[73px] flex w-[360px] flex-col text-[22.400px] tracking-[0.600px] text-[#444]">
        <div className="flex h-[51px] items-center bg-[#e5f6fe] pl-[21px]">
          <span className="w-[152px] pb-[5px]">E-Commerce</span>
          <DemoTag className="mb-1 tracking-normal" />
        </div>
        <div className="flex h-[52px] items-center border-b border-[#dcdcdc] bg-[#ebebeb] pl-[21px]">
          <span className="w-[205px] whitespace-nowrap pb-[5px]">Video Conference</span>
          <DemoTag className="mb-0.5 tracking-normal" />
        </div>
        <div className="flex h-[54px] items-center bg-[#f9f9f9] pb-[3px] pl-[21px] tracking-normal">Edit...</div>
      </div>
    </div>
  );
}

function StepBadge({ n, className }) {
  return (
    <div className={"absolute flex size-[56px] items-center justify-center rounded-full font-['Roboto',sans-serif] text-[49px] font-bold leading-none text-white " + className}>{n}</div>
  );
}

function Blurb({ title, gap, children }) {
  return (
    <div className="w-[447px] shrink-0 font-['Roboto',sans-serif]">
      <h2 className="text-[49.300px] font-bold leading-[58px] text-[#666]">{title}</h2>
      <p className={"text-[40.800px] leading-[48.200px] text-black " + gap}>{children}</p>
    </div>
  );
}

export default function App() {
  return (
    <main className="relative h-[1427px] w-[2284px] overflow-hidden bg-white pl-[93px] pt-[128px] font-['Lato',sans-serif]">
      <section className="flex h-[590px]">
        <div className="-ml-[0.5px] mr-[0.5px] pt-[11px]">
          <Blurb title="Original" gap="mt-[34px]">
            It takes <b className="text-[#06a7bb]">3</b> steps to<br />switch to another<br />environment.
          </Blurb>
        </div>
        <div className="shadow-[0_0_44px_rgba(0,0,0,0.1)]">
          <OriginalScreen />
        </div>
        <div className="ml-[72px] flex flex-col gap-[24px]">
          <div className="w-[562px] shadow-[0_0_36px_rgba(0,0,0,0.1)]">
            <DimmedScreen size={MINI_A} dots={[[121, 9], [127, 9]]}>
              <AssemblyDetails />
            </DimmedScreen>
          </div>
          <div className="w-[564px] shadow-[0_0_36px_rgba(0,0,0,0.1)]">
            <DimmedScreen size={MINI_B} dots={[[125, 16], [128, 11], [133, 13], [138, 9]]}>
              <AssemblyList />
            </DimmedScreen>
          </div>
        </div>
      </section>

      <div className="mt-[65px] flex h-[161px] pl-[1227px]">
        <svg className="h-[161px] w-[28px]" viewBox="0 0 28 161" fill="none" stroke="#222" strokeWidth="3" strokeLinecap="round">
          <path d="M14 1.500V158M2 146.500L14 159L26 146.500" />
        </svg>
        <p className="ml-[50px] mt-[42px] font-['Roboto',sans-serif] text-[40.800px] leading-[48px] text-[#4a4a4a]">Reduce the switch steps</p>
      </div>

      <section className="mt-[64px] flex">
        <div className="-ml-[0.5px] mr-[0.5px] pt-[24px]">
          <Blurb title="Changes" gap="mt-[37px]">
            Only need <b className="text-[#9bc23c]">1</b> click<br />to switch<br />environments.
          </Blurb>
        </div>
        <ChangesScreen />
      </section>

      <svg className="pointer-events-none absolute left-0 top-0 h-[460px] w-[2284px]" viewBox="0 0 2284 460" fill="none" stroke="#06a7bb" strokeWidth="3.500">
        <path d="M1119.300 139.500V97.700H1899.500V119M1888 107.500L1899.500 119L1911 107.500" />
        <path d="M1766 204.700H1730.600V435.500M1718.500 423.500L1730.600 435.500L1742.500 423.500" />
      </svg>
      <StepBadge n="1" className="left-[1454px] top-[31px] bg-[#06a7bb]" />
      <StepBadge n="2" className="left-[1656px] top-[260px] bg-[#06a7bb]" />
      <StepBadge n="3" className="left-[2059px] top-[652px] bg-[#06a7bb]" />
      <StepBadge n="1" className="left-[1075px] top-[1154px] bg-[#9bc23c]" />
      <svg className="absolute left-[1009px] top-[1170px] h-[28px] w-[29px]" viewBox="0 0 29 28" fill="#fff" stroke="#111" strokeWidth="1.800" strokeLinejoin="round">
        <path d="M9 14.500L4 5.500C2.500 2.500 6 .5 7.800 3L12 9.200C13 7.800 15 7.800 16.200 9C17.800 8 19.800 8.500 20.500 9.800C22.500 9.300 24 10 24.500 11.500L26.500 17.500C27.200 20 26.500 21.500 25.500 23L16 27L6.500 21.500L2.300 18C.8 16 2.500 13.500 5 14.500L9 17Z" />
        <path d="M13 16l2.500 5M16.500 15l2.500 5M20 14l2 4.500" strokeWidth="1.500" />
      </svg>
    </main>
  );
}
